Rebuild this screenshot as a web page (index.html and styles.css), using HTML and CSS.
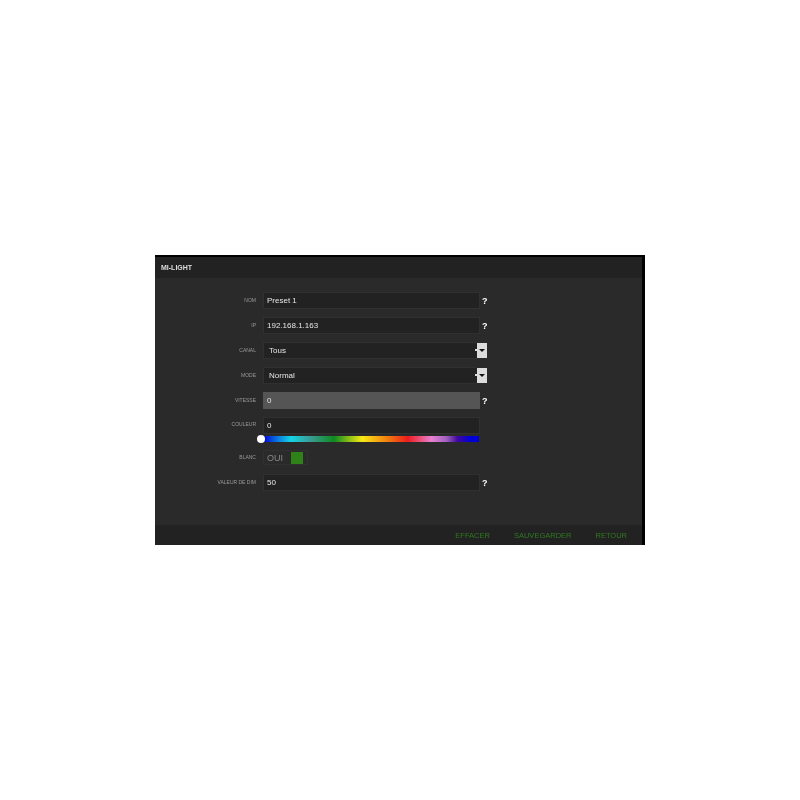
FILE: index.html
```html
<!DOCTYPE html>
<html lang="fr">
<head>
    <meta charset="UTF-8">
    <meta name="viewport" content="width=device-width, initial-scale=1.0">
    <title>Mi-Light</title>
    <link rel="stylesheet" href="styles.css">
</head>
<body>
    <div class="panel">
        <div class="panel-header">MI-LIGHT</div>

        <div class="form">
            <div class="row">
                <div class="label">Nom</div>
                <div class="field">Preset 1</div>
                <div class="help">?</div>
            </div>
            <div class="row">
                <div class="label">IP</div>
                <div class="field">192.168.1.163</div>
                <div class="help">?</div>
            </div>
            <div class="row">
                <div class="label">Canal</div>
                <div class="field field-select">Tous</div>
                <div class="select-arrow"><span class="arrow-down"></span></div>
            </div>
            <div class="row">
                <div class="label">Mode</div>
                <div class="field field-select">Normal</div>
                <div class="select-arrow"><span class="arrow-down"></span></div>
            </div>
            <div class="row">
                <div class="label">Vitesse</div>
                <div class="field field-disabled">0</div>
                <div class="help">?</div>
            </div>
            <div class="row row-color">
                <div class="label">Couleur</div>
                <div class="color-box">
                    <div class="field">0</div>
                    <div class="rainbow"><span class="knob"></span></div>
                </div>
            </div>
            <div class="row row-white">
                <div class="label">Blanc</div>
                <div class="toggle">
                    <span class="toggle-text">OUI</span>
                    <span class="toggle-box"></span>
                </div>
            </div>
            <div class="row">
                <div class="label">Valeur de dim</div>
                <div class="field">50</div>
                <div class="help">?</div>
            </div>
        </div>

        <div class="panel-footer">
            <a class="footer-link">EFFACER</a>
            <a class="footer-link">SAUVEGARDER</a>
            <a class="footer-link">RETOUR</a>
        </div>
    </div>
</body>
</html>
```

FILE: styles.css
```css
body {
    margin: 0;
    padding: 255px 0 0 155px;
    background-color: #fff;
    font-family: "Liberation Sans", Arial, sans-serif;
}

.panel {
    width: 487px;
    height: 288px;
    background-color: #2a2a2a;
    border-top: 2px solid #000;
    border-right: 3px solid #000;
    display: flex;
    flex-direction: column;
    filter: blur(0.3px);
}

.panel-header {
    height: 21px;
    line-height: 22px;
    padding-left: 6px;
    background-color: #222;
    color: #ddd;
    font-size: 7px;
    font-weight: bold;
}

.form {
    flex: 1;
    padding-top: 14px;
}

.row {
    display: flex;
    align-items: center;
    height: 17px;
    margin-bottom: 8px;
}

.label {
    width: 101px;
    margin-right: 7px;
    margin-bottom: 2px;
    text-align: right;
    text-transform: uppercase;
    color: #999;
    font-size: 5px;
}

.field {
    width: 212px;
    height: 15px;
    line-height: 15px;
    padding-left: 3px;
    background-color: #222;
    border: 1px solid #303030;
    color: #e4e4e4;
    font-size: 8px;
}

.field-select {
    width: 208px;
    padding-left: 5px;
    border-right: none;
}

.field-disabled {
    background-color: #555;
    border-color: #555;
}

.help {
    margin-left: 2px;
    color: #fff;
    font-size: 9px;
    font-weight: bold;
}

.select-arrow {
    position: relative;
    width: 10px;
    height: 15px;
    background-color: #dcdcdc;
    display: flex;
    align-items: center;
    justify-content: center;
}

/* Белая точка слева от стрелки */
.select-arrow::before {
    content: '';
    position: absolute;
    left: -2px;
    top: 6px;
    width: 2px;
    height: 2px;
    background-color: #ddd;
}

.arrow-down {
    width: 0;
    height: 0;
    border-left: 3px solid transparent;
    border-right: 3px solid transparent;
    border-top: 3px solid #111;
}

/* Цветовая полоса идёт под полем */
.row-color {
    align-items: flex-start;
    height: 26px;
    margin-bottom: 7px;
}

.row-color .label {
    margin-top: 4px;
}

.rainbow {
    position: relative;
    width: 216px;
    height: 6px;
    margin-top: 2px;
    background: linear-gradient(to right, #0000d8 0%, #0a7ce0 7%, #14d4e4 13%, #3a9c94 22%, #0e8a20 33%, #8cc018 40%, #f8e814 46%, #f07a10 58%, #ec1c1c 67%, #e880d0 78%, #a060c0 85%, #40089c 90%, #0000d8 96%, #0000d8 100%);
}

.knob {
    position: absolute;
    left: -6px;
    top: -1px;
    width: 8px;
    height: 8px;
    border-radius: 50%;
    background-color: #fff;
}

.row-white {
    height: 15px;
    margin-bottom: 9px;
}

.toggle {
    width: 40px;
    height: 13px;
    padding-left: 3px;
    border: 1px solid #303030;
    display: flex;
    align-items: center;
    gap: 8px;
}

.toggle-text {
    color: #888;
    font-size: 9px;
}

.toggle-box {
    width: 12px;
    height: 12px;
    background-color: #2e8218;
}

.panel-footer {
    height: 20px;
    background-color: #222;
    display: flex;
    justify-content: flex-end;
    align-items: center;
    gap: 24px;
    padding-right: 15px;
}

.footer-link {
    color: #2f7a20;
    font-size: 7.5px;
}
```
